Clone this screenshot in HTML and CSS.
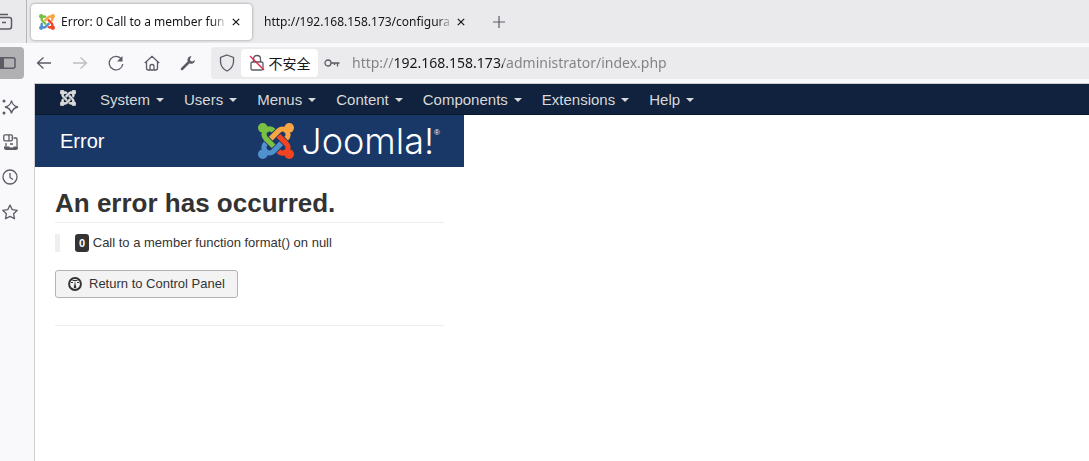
FILE: index.html
```html
<!DOCTYPE html>
<html lang="en">
<head>
    <meta charset="UTF-8">
    <meta name="viewport" content="width=device-width, initial-scale=1.0">
    <title>Error: 0 Call to a member function format() on null</title>
    <link rel="stylesheet" href="styles.css">
</head>
<body>
<svg class="defs" aria-hidden="true">
    <symbol id="arm" viewBox="0 0 24 24">
        <circle cx="3.2" cy="20.8" r="3.2" fill="currentColor"/>
        <path d="M15.5 13.6L10.2 18.9C8.6 20.4 6.4 20.3 5 18.9C3.6 17.4 3.6 15.1 5.2 13.6" fill="none" stroke="currentColor" stroke-width="3.5"/>
    </symbol>
    <symbol id="joomla" viewBox="0 0 24 24">
        <use href="#arm" width="24" height="24" class="blue"/>
        <use href="#arm" width="24" height="24" class="green" transform="rotate(90 12 12)"/>
        <use href="#arm" width="24" height="24" class="orange" transform="rotate(180 12 12)"/>
        <use href="#arm" width="24" height="24" class="red" transform="rotate(270 12 12)"/>
    </symbol>
    <symbol id="close" viewBox="0 0 10 10">
        <path d="M1 1l8 8M9 1l-8 8" fill="none" stroke="currentColor" stroke-width="1.5"/>
    </symbol>
</svg>

<div class="tabs">
    <button class="tab-list" aria-label="Recent tabs">
        <svg width="13" height="18" viewBox="0 0 13 18"><path d="M0 1.500h8M0 4.500h9.500q2 0 2 2v7q0 2.500-2.500 2.500H0M2 9.500h4" fill="none" stroke="currentColor" stroke-width="1.5"/></svg>
    </button>
    <div class="tab active">
        <svg class="favicon"><use href="#joomla"/></svg>
        <span class="tab-title">Error: 0 Call to a member fun</span>
        <button class="close" aria-label="Close tab"><svg width="8" height="8"><use href="#close"/></svg></button>
    </div>
    <div class="tab">
        <span class="tab-title">http://192.168.158.173/configura</span>
        <button class="close" aria-label="Close tab"><svg width="8" height="8"><use href="#close"/></svg></button>
    </div>
    <button class="new-tab" aria-label="New tab">
        <svg width="12" height="12" viewBox="0 0 12 12"><path d="M6 0v12M0 6h12" stroke="currentColor" stroke-width="1.2"/></svg>
    </button>
</div>

<div class="toolbar">
    <button class="sidebar-toggle" aria-label="Sidebar">
        <svg width="16" height="12" viewBox="0 0 16 12"><rect x="-2" y=".8" width="17" height="10.400" rx="2" fill="none" stroke="currentColor" stroke-width="1.5"/><path d="M0 1h4v10H0z" fill="currentColor"/></svg>
    </button>
    <div class="tools">
        <button aria-label="Back"><svg viewBox="0 0 16 16"><path d="M15 8H1.500M7.500 2.500L1.500 8l6 5.500"/></svg></button>
        <button aria-label="Forward" disabled><svg viewBox="0 0 16 16"><path d="M1 8h13.500M8.500 2.500l6 5.500-6 5.500"/></svg></button>
        <button aria-label="Reload"><svg viewBox="0 0 16 16"><path d="M13.500 4A6.800 6.800 0 1 0 14.800 9"/><path d="M14.500 1v5.500H9z" fill="currentColor" stroke="none"/></svg></button>
        <button aria-label="Home"><svg viewBox="0 0 16 16"><path d="M.8 8L8 1.300 15.200 8M2.500 7v6q0 2 2 2h7q2 0 2-2V7M6 15v-4q0-1.500 2-1.500t2 1.500v4"/></svg></button>
        <button aria-label="Tools"><svg viewBox="0 0 16 16"><path d="M2 14L9 7" stroke-width="2.500" stroke-linecap="round"/><path d="M11.500 1Q7 1.500 7.500 6l2.500 2.700Q14.500 9.500 15 5l-2.500 1.500-2-.5-.5-2z" fill="currentColor" stroke="none"/></svg></button>
    </div>
    <div class="urlbar">
        <svg class="shield" width="16" height="18" viewBox="0 0 16 18"><path d="M8 1l6.500 2.500V8q-.5 6-6.500 9Q2 14 1.500 8V3.500z"/></svg>
        <button class="insecure">
            <svg width="16" height="18" viewBox="0 0 16 18"><path d="M4.500 8V5q0-3.500 3.500-3.500T11.500 5v3M3.500 8h9q1.500 0 1.500 1.500v5q0 1.500-1.500 1.500h-9Q2 16 2 14.500v-5Q2 8 3.500 8"/><path class="strike" d="M1 2l14 14"/></svg>
            <span lang="zh-CN">不安全</span>
        </button>
        <svg class="key" width="16" height="10" viewBox="0 0 16 10"><circle cx="4" cy="5" r="3"/><path d="M7 5h8.500M13.500 5v3.500M10.500 5v2"/></svg>
        <input class="address" type="text" aria-label="Address" value="http://192.168.158.173/administrator/index.php">
    </div>
</div>

<div class="main">
    <div class="sidebar">
        <button aria-label="Assistant"><svg viewBox="0 0 18 18"><path d="M10.500 2.500Q11.500 8 17 9q-5.500 1-6.500 6.500Q9.500 10 4 9q5.500-1 6.500-6.500z"/><circle cx="3" cy="3" r="1.500" fill="currentColor" stroke="none"/><circle cx="3" cy="15" r="1.500" fill="currentColor" stroke="none"/></svg></button>
        <button aria-label="Synced tabs"><svg viewBox="0 0 18 18"><rect x="2.800" y="1.800" width="8.500" height="6" rx="1"/><path d="M8 2v6M5 10v3.500M12.500 5H15q1 0 1 1v7.500M9 11h3"/><path d="M3 13.500h5l1 1h3l1-1h4V15q0 2-2 2H5q-2 0-2-2z" fill="currentColor" stroke="none"/></svg></button>
        <button aria-label="History"><svg viewBox="0 0 18 18"><circle cx="9" cy="9" r="7"/><path d="M9 5v4.500l3 2"/></svg></button>
        <button aria-label="Bookmarks"><svg viewBox="0 0 18 18"><path stroke-linejoin="round" d="M9 2l2.200 4.600 5.100.7-3.700 3.500.9 5L9 13.400l-4.500 2.400.9-5L1.700 7.300l5.100-.7z"/></svg></button>
    </div>

    <div class="page">
        <nav class="navbar">
            <a class="brand" href="#" aria-label="Joomla"><svg width="16" height="16" viewBox="0 0 24 24"><g stroke="currentColor"><use href="#arm"/><use href="#arm" transform="rotate(90 12 12)"/><use href="#arm" transform="rotate(180 12 12)"/><use href="#arm" transform="rotate(270 12 12)"/></g></svg></a>
            <a href="#">System</a>
            <a href="#">Users</a>
            <a href="#">Menus</a>
            <a href="#">Content</a>
            <a href="#">Components</a>
            <a href="#">Extensions</a>
            <a href="#">Help</a>
        </nav>
        <div class="wrap">
            <header class="header">
                <div class="page-title">Error</div>
                <div class="logo">
                    <svg width="36" height="36"><use href="#joomla"/></svg>
                    <span>Joomla!</span><sup>®</sup>
                </div>
            </header>
            <section class="content">
                <h1>An error has occurred.</h1>
                <blockquote><span class="label">0</span> Call to a member function format() on null</blockquote>
                <button class="btn">
                    <svg width="14" height="14" viewBox="0 0 14 14"><circle cx="7" cy="7" r="5.900" fill="none" stroke="currentColor" stroke-width="2"/><path d="M7 3.500l1 6.500H6z" fill="currentColor"/><circle cx="7" cy="10" r="1.300" fill="currentColor"/><path d="M3 5.500h2M9 5.500h2M4.500 3.500h5" stroke="currentColor"/></svg>
                    Return to Control Panel
                </button>
                <hr>
            </section>
        </div>
    </div>
</div>
</body>
</html>
```
FILE: styles.css
```css
* {
    box-sizing: border-box;
}
body {
    margin: 0;
    min-height: 100vh;
    display: flex;
    flex-direction: column;
    font-family: "Liberation Sans", Arial, sans-serif;
    font-size: 13px;
    line-height: 18px;
    color: #333;
    background: #f9f9fb;
}
button {
    padding: 0;
    border: none;
    background: none;
    color: #5b5b66;
    font: inherit;
    display: flex;
    align-items: center;
    justify-content: center;
}
svg {
    display: block;
    flex: none;
}
.defs {
    position: absolute;
    width: 0;
    height: 0;
}
.blue { color: #5091cd; }
.green { color: #7ac143; }
.orange { color: #f9a541; }
.red { color: #f44321; }

/* tab strip */
.tabs {
    display: flex;
    align-items: center;
    height: 43px;
    background: #eaeaec;
    font-family: "Noto Sans", "Open Sans", sans-serif;
    font-size: 12px;
    color: #15141a;
}
.tab-list {
    width: 27px;
    height: 43px;
    justify-content: flex-start;
    border-right: 1px solid #b5b5b9;
}
.tab {
    display: flex;
    align-items: center;
    width: 221px;
    height: 36px;
    margin-left: 4px;
    padding: 0 12px 0 8px;
    border-radius: 4px;
}
.tab.active {
    background: #fff;
    box-shadow: 0 0 3px rgba(0, 0, 0, 0.4);
}
.favicon {
    width: 16px;
    height: 16px;
    margin-right: 6px;
}
.tab-title {
    flex: 1;
    overflow: hidden;
    white-space: nowrap;
    -webkit-mask-image: linear-gradient(to left, transparent, #000 16px);
    mask-image: linear-gradient(to left, transparent, #000 16px);
}
.close {
    width: 8px;
    margin-left: 4px;
    color: #15141a;
}
.new-tab {
    width: 36px;
    height: 36px;
    margin-left: 4px;
}

/* address bar */
.toolbar {
    display: flex;
    align-items: center;
    height: 40px;
}
.sidebar-toggle {
    width: 24px;
    height: 32px;
    justify-content: flex-start;
    background: #b1b1b3;
    border-radius: 0 4px 4px 0;
}
.tools {
    display: flex;
    margin: 0 5px 0 2px;
}
.tools button {
    width: 36px;
    height: 32px;
}
.tools button:disabled {
    color: #bdbdc2;
}
.tools svg {
    width: 16px;
    height: 16px;
}
.tools svg, .urlbar svg, .sidebar svg {
    fill: none;
    stroke: currentColor;
    stroke-width: 1.3;
}
.urlbar {
    flex: 1;
    display: flex;
    align-items: center;
    height: 32px;
    padding-left: 8px;
    color: #5b5b66;
    background: #ebebed;
    border-radius: 4px 0 0 4px;
}
.insecure {
    gap: 4px;
    width: 77px;
    height: 28px;
    margin: 0 6px;
    background: #fff;
    border-radius: 4px;
}
.insecure span {
    font-family: "Noto Sans CJK SC", sans-serif;
    font-size: 14px;
    color: #15141a;
}
.urlbar .strike {
    stroke: #e22850;
}
.address {
    flex: 1;
    height: 26px;
    margin-left: 12px;
    padding: 0 0 2px;
    border: none;
    outline: none;
    font-family: "Noto Sans", "Open Sans", sans-serif;
    font-size: 14px;
    color: transparent;
    background: linear-gradient(to right, #808084 42px, #15141a 42px, #15141a 151px, #808084 151px);
    -webkit-background-clip: text;
    background-clip: text;
}

/* sidebar */
.main {
    flex: 1;
    display: flex;
}
.sidebar {
    width: 34px;
    padding-top: 6px;
}
.sidebar button {
    width: 20px;
    height: 35px;
}
.sidebar svg {
    width: 18px;
    height: 18px;
}

/* admin page */
.page {
    flex: 1;
    background: #fff;
    border: 1px solid #cfcfd3;
    border-width: 1px 0 0 1px;
}
.navbar {
    display: flex;
    height: 31px;
    padding-left: 15px;
    background: #10223e;
    border-bottom: 1px solid #0b182c;
}
.navbar a {
    display: flex;
    align-items: center;
    padding: 1px 10px 0;
    font-size: 15px;
    color: #d9d9d9;
    text-decoration: none;
}
.navbar a::after {
    content: "";
    margin-left: 6px;
    border: 4px solid transparent;
    border-top-color: #d9d9d9;
    border-bottom: none;
}
.navbar .brand {
    width: 40px;
    padding: 0 0 2px 10px;
}
.navbar .brand::after {
    display: none;
}
.wrap {
    max-width: 429px;
}
.header {
    display: flex;
    align-items: center;
    justify-content: space-between;
    height: 52px;
    padding: 0 24px 0 25px;
    background: #1a3867;
    color: #fff;
}
.page-title {
    font-size: 20px;
}
.logo {
    display: flex;
    align-items: center;
    gap: 7px;
}
.logo span {
    font-family: Inter, Lato, sans-serif;
    font-size: 36px;
    font-weight: 300;
}
.logo sup {
    align-self: flex-start;
    margin-left: -7px;
    font-size: 8px;
    line-height: 20px;
}
.content {
    padding: 18px 20px;
}
h1 {
    margin: 0 0 11px;
    padding-bottom: 1px;
    border-bottom: 1px solid #eee;
    font-size: 26px;
    line-height: 36px;
}
blockquote {
    margin: 0 0 18px;
    padding-left: 15px;
    border-left: 5px solid #eee;
}
.label {
    display: inline-block;
    padding: 0 4px;
    background: #333;
    border-radius: 3px;
    font-size: 11px;
    font-weight: bold;
    color: #fff;
}
.btn {
    gap: 7px;
    height: 28px;
    padding: 0 12px;
    background: #f3f3f3;
    border: 1px solid #b3b3b3;
    border-radius: 3px;
    color: #333;
}
hr {
    margin: 27px 0 18px;
    border: none;
    border-top: 1px solid #eee;
}
```
